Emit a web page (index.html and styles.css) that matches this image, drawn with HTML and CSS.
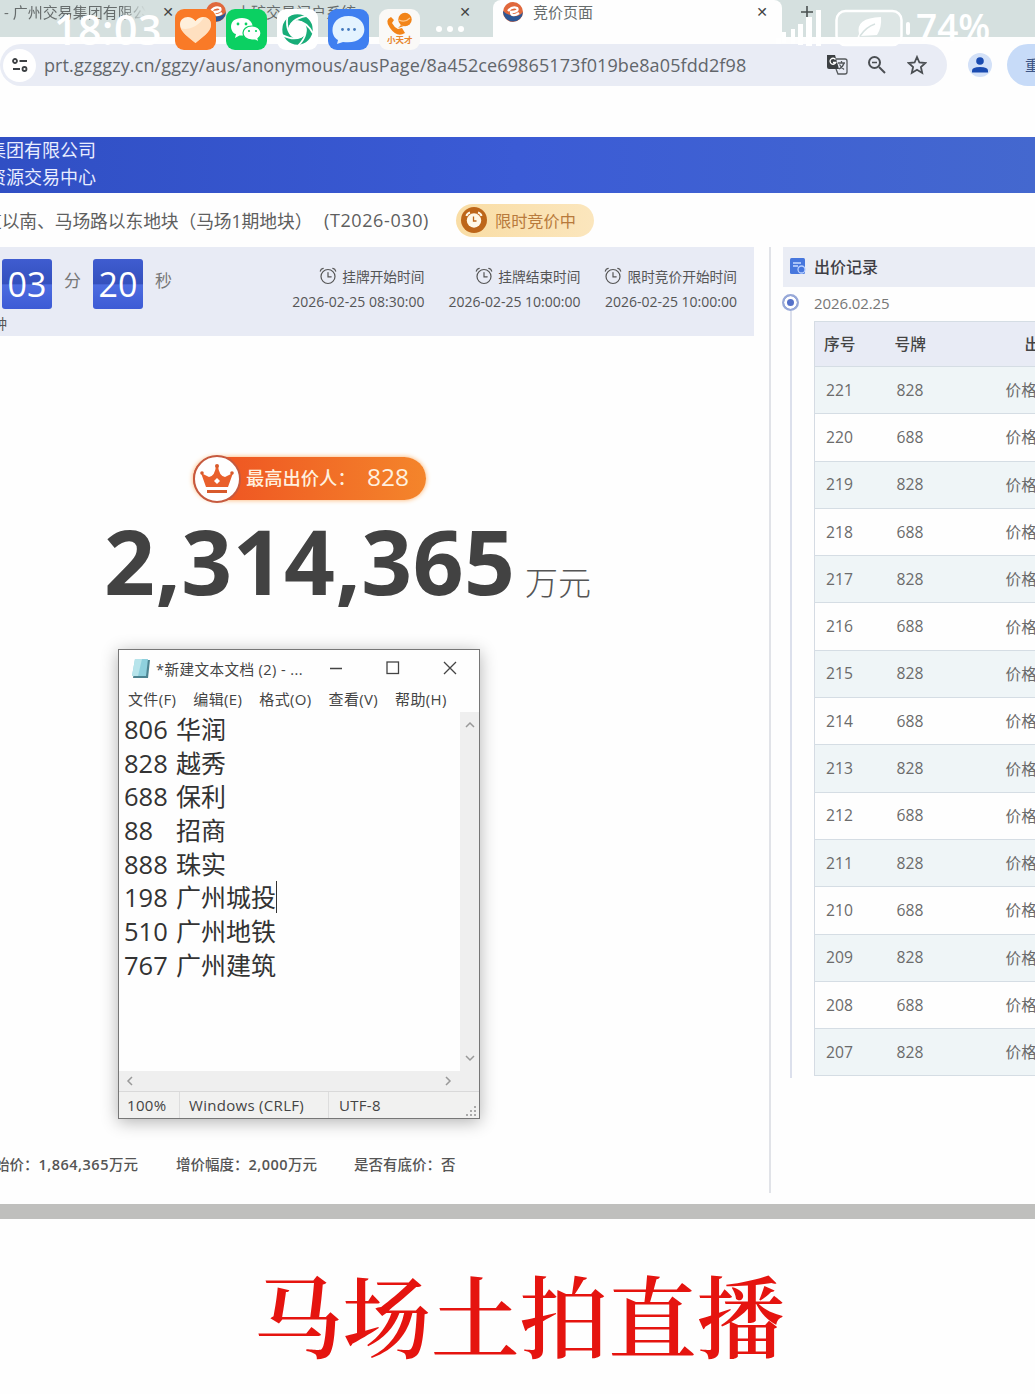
FILE: index.html
```html
<!DOCTYPE html>
<html lang="zh-CN">

<head>
    <meta charset="UTF-8">
    <meta name="viewport" content="width=device-width, initial-scale=1.0">
    <title>竞价页面</title>
    <link rel="stylesheet" href="styles.css">
</head>

<body>
    <!-- Shared icons -->
    <svg class="defs" width="0" height="0">
        <symbol id="clock" viewBox="0 0 18 18">
            <g fill="none" stroke="currentColor" stroke-width="1.2" stroke-linecap="round">
                <circle cx="9" cy="9.5" r="7" />
                <path d="M9 5.5v4.3h3.2M1.3 4.2Q1.8 1.8 4.2 1.4M16.7 4.2Q16.2 1.8 13.8 1.4" />
            </g>
        </symbol>
        <symbol id="logo" viewBox="0 0 20 20">
            <circle cx="10" cy="10" r="10" fill="#e0683c" />
            <path d="M0 9a10 10 0 0 0 20 1c-4 5-9 5-13 3-3-1-5-2-7-4z" fill="#2d5795" />
            <path d="M5 9q4-5 9-3c2 3-2 4-6 4 0 4 4 4 8 1" fill="none" stroke="#fff" stroke-width="2.3" />
        </symbol>
    </svg>

    <div class="tabs">
        <div class="tab tab-first"><span class="tab-text">- 广州交易集团有限公</span><span class="close">✕</span></div>
        <div class="tab tab-second"><svg class="logo"><use href="#logo" /></svg><span class="tab-text">土矿交易门户系统</span><span class="close">✕</span></div>
        <div class="tab tab-active"><svg class="logo"><use href="#logo" /></svg><span class="tab-text">竞价页面</span><span class="close">✕</span></div>
        <svg class="plus" width="14" height="14" viewBox="0 0 14 14"><path d="M7 1v12M1 7h12" stroke="#4a5050" stroke-width="1.6" /></svg>
    </div>

    <div class="toolbar">
        <div class="address">
            <span class="site">
                <svg width="16" height="14" viewBox="0 0 16 14" fill="none" stroke="#3c4043" stroke-width="1.8"><circle cx="3" cy="3" r="2" /><path d="M7.5 3H15M1 11h7" /><circle cx="12.5" cy="11" r="2" /></svg>
            </span>
            <span class="url">prt.gzggzy.cn/ggzy/aus/anonymous/ausPage/8a452ce69865173f019be8a05fdd2f98</span>
            <svg class="translate" width="22" height="22" viewBox="0 0 22 22">
                <path d="M1 1h8l4 14H3q-2 0-2-2z" fill="#3c4043" />
                <path d="M9.5 5.5a3 3 0 1 0 .3 3H7" fill="none" stroke="#fff" stroke-width="1.3" />
                <path d="M10 5h9q2 0 2 2v11q0 2-2 2h-7l-2-5M12 9h7M15.5 7v2M18 9q-1 4-5 6M13.5 10.5q2 3 4.5 5" fill="none" stroke="#55595c" stroke-width="1.3" />
            </svg>
            <svg class="search" width="20" height="20" viewBox="0 0 20 20" fill="none" stroke="#4b4f53" stroke-width="2"><circle cx="7.5" cy="7.5" r="5.5" /><path d="M12 12l6 6" /><path d="M5 7.5h5" stroke-width="1.5" /></svg>
            <svg class="star" width="20" height="20" viewBox="0 0 20 20"><path d="M10 2l2.4 5.5 6 .5-4.5 4 1.3 6-5.2-3.2L4.8 18l1.3-6L1.6 8l6-.5z" fill="none" stroke="#4b4f53" stroke-width="1.8" /></svg>
        </div>
        <span class="avatar"><svg width="16" height="16" viewBox="0 0 16 16" fill="#1a4bb0"><circle cx="8" cy="4" r="3.8" /><path d="M0 15.5v-2q0-3.5 8-3.5t8 3.5v2z" /></svg></span>
        <span class="restart">重</span>
    </div>

    <!-- Phone status bar, floats over the browser -->
    <div class="status">
        <span class="time">18:03</span>
        <svg class="app" viewBox="0 0 41 41"><rect width="41" height="41" rx="9" fill="#f97a27" /><path d="M20.5 34C9 25 5 21 5 15.5 5 8 15 5 20.5 12 26 5 36 8 36 15.5 36 21 32 25 20.5 34z" fill="#fff0dc" /><path d="M20.5 34C14 29 8 24 6 19c5 3 18-1 23-11 5 1 7 4 7 7.5C36 21 32 25 20.5 34z" fill="#ffd9b4" opacity=".7" /></svg>
        <svg class="app" viewBox="0 0 41 41"><rect width="41" height="41" rx="9" fill="#0bd062" /><path d="M16 9C1 9 4 24 10 25l-1 4 4.5-2.5h4C30 26 30 9 16 9z" fill="#fff" /><path d="M26 17c-12 0-12 14 0 14h3l4 2-1-3.5C38 25 34 17 26 17z" fill="#fff" stroke="#0bd062" stroke-width="1.2" /><g fill="#0bd062"><circle cx="12" cy="15" r="1.4" /><circle cx="20" cy="15" r="1.4" /><circle cx="23" cy="22" r="1.1" /><circle cx="30" cy="22" r="1.1" /></g></svg>
        <svg class="app" viewBox="0 0 41 41"><rect width="41" height="41" rx="9" fill="#fff" />
            <circle cx="20.5" cy="20.5" r="12.2" fill="none" stroke="#18ad78" stroke-width="6" />
            <g fill="none" stroke="#fff" stroke-width="1.8"><path id="cut" d="M12 22Q13 10 29 7" /><use href="#cut" transform="rotate(72 20.5 20.5)" /><use href="#cut" transform="rotate(144 20.5 20.5)" /><use href="#cut" transform="rotate(216 20.5 20.5)" /><use href="#cut" transform="rotate(288 20.5 20.5)" /></g>
        </svg>
        <svg class="app" viewBox="0 0 41 41"><rect width="41" height="41" rx="9" fill="#3f7ff0" /><path d="M20.500 7C2 7 1 27 10 31l-1 4 6-2c28 4 27-26 5.5-26z" fill="#e4f3ff" /><g fill="#4479bd"><circle cx="14.5" cy="20.5" r="1.4" /><circle cx="20.5" cy="20.5" r="1.4" /><circle cx="26.5" cy="20.5" r="1.4" /></g></svg>
        <svg class="app" viewBox="0 0 41 41"><rect width="41" height="41" rx="9" fill="#faf9f7" /><circle cx="26" cy="10.5" r="6.7" fill="#f28418" /><path d="M22 16l-3 3 6-2zM12 8q-7 3-1 11 7 10 15 5l-3-5-4 1q-4-2-6-6l2-3z" fill="#f28418" /><path d="M20 11q6 3 11-2" fill="none" stroke="#ffc789" stroke-width="1.2" /><text x="8" y="34" class="app-name">小天才</text></svg>
        <span class="dots"><i></i><i></i><i></i></span>
        <svg class="signal" width="80" height="46" viewBox="0 0 80 46" fill="#fff"><path d="M28 38h5v6h-5zM34 32h4v11h-4zM43 29h4v15h-4zM50 24h5v21h-5zM58 17h6v29h-6zM68 10h5v36h-5z" /></svg>
        <svg class="battery" width="76" height="38" viewBox="0 0 76 38"><rect x="1.5" y="2" width="65" height="34" rx="9" fill="#fff" fill-opacity=".2" stroke="#fff" stroke-width="2.5" /><path d="M46 8q-26 1-22 17l-3 6 4-4 17-1q5-8 4-18z" fill="#fff" /><path d="M25 27q6-9 15-12" fill="none" stroke="#d7e2e1" stroke-width="1.5" /><rect x="71" y="13" width="4" height="13" rx="2" fill="#fff" /></svg>
        <span class="percent">74%</span>
    </div>

    <header class="banner">
        <p>集团有限公司</p>
        <p>资源交易中心</p>
    </header>

    <div class="title">
        <h1>道以南、马场路以东地块（马场1期地块）</h1>
        <span class="code">(T2026-030)</span>
        <span class="state">
            <svg width="26" height="26" viewBox="0 0 26 26"><circle cx="13" cy="13" r="13" fill="#bd661a" /><circle cx="13" cy="13.5" r="7.2" fill="#fff8e8" /><path d="M5.5 9Q6 6.5 9 5.5M20.5 9Q20 6.5 17 5.5" fill="none" stroke="#fff8e8" stroke-width="2" /><path d="M12.5 9.5V14h3" fill="none" stroke="#bd661a" stroke-width="1.3" /></svg>
            限时竞价中
        </span>
    </div>

    <main>
        <section class="auction">
            <div class="countdown">
                <div class="timer">
                    <div class="timer-row">
                        <span class="flip">03</span><span class="unit">分</span>
                        <span class="flip">20</span><span class="unit">秒</span>
                    </div>
                    <p class="hint">钟</p>
                </div>
                <div class="times">
                    <div class="when"><p><svg><use href="#clock" /></svg>挂牌开始时间</p><p class="date">2026-02-25 08:30:00</p></div>
                    <div class="when"><p><svg><use href="#clock" /></svg>挂牌结束时间</p><p class="date">2026-02-25 10:00:00</p></div>
                    <div class="when"><p><svg><use href="#clock" /></svg>限时竞价开始时间</p><p class="date">2026-02-25 10:00:00</p></div>
                </div>
            </div>

            <div class="bidder">
                <span class="crown"><svg width="34" height="32" viewBox="0 0 34 32"><path d="M1 10l8 4q6-1 7-11h2q1 10 7 11l8-4-5 14H6z" fill="#e9602c" /><g fill="#d85a2c"><circle cx="17" cy="3" r="2" /><circle cx="2" cy="10" r="1.8" /><circle cx="32" cy="10" r="1.8" /><path d="M7 27h20v3H7z" /></g><path d="M17 15l3 3-3 3-3-3z" fill="#fff" /></svg></span>
                <span class="bidder-label">最高出价人：</span><b>828</b>
            </div>
            <div class="price"><strong>2,314,365</strong><span>万元</span></div>

            <div class="rules">
                <span class="start">始价：<em>1,864,365</em>万元</span>
                <span class="step">增价幅度：<em>2,000</em>万元</span>
                <span>是否有底价：否</span>
            </div>
        </section>

        <aside class="records">
            <h2><svg width="16" height="16" viewBox="0 0 16 16"><rect width="15" height="16" rx="1.5" fill="#4777dd" /><path d="M3 5h8M3 8h5" stroke="#c9dcff" stroke-width="1.3" /><circle cx="11.5" cy="11.5" r="3.5" fill="#4777dd" stroke="#b9d0ff" stroke-width="1.3" /></svg>出价记录</h2>
            <div class="timeline">
                <div class="rail"><span class="dot"></span><span class="line"></span></div>
                <div class="day">
                    <p class="day-date">2026.02.25</p>
                    <table>
                        <thead>
                            <tr><th>序号</th><th>号牌</th><th class="kind">出</th></tr>
                        </thead>
                        <tbody>
                            <tr><td>221</td><td>828</td><td>价格</td></tr>
                            <tr><td>220</td><td>688</td><td>价格</td></tr>
                            <tr><td>219</td><td>828</td><td>价格</td></tr>
                            <tr><td>218</td><td>688</td><td>价格</td></tr>
                            <tr><td>217</td><td>828</td><td>价格</td></tr>
                            <tr><td>216</td><td>688</td><td>价格</td></tr>
                            <tr><td>215</td><td>828</td><td>价格</td></tr>
                            <tr><td>214</td><td>688</td><td>价格</td></tr>
                            <tr><td>213</td><td>828</td><td>价格</td></tr>
                            <tr><td>212</td><td>688</td><td>价格</td></tr>
                            <tr><td>211</td><td>828</td><td>价格</td></tr>
                            <tr><td>210</td><td>688</td><td>价格</td></tr>
                            <tr><td>209</td><td>828</td><td>价格</td></tr>
                            <tr><td>208</td><td>688</td><td>价格</td></tr>
                            <tr><td>207</td><td>828</td><td>价格</td></tr>
                        </tbody>
                    </table>
                </div>
            </div>
        </aside>
    </main>

    <!-- Notepad window -->
    <div class="notepad">
        <div class="note-title">
            <svg width="20" height="21" viewBox="0 0 20 21"><path d="M5 2h14l-2 18H2z" fill="#4d8390" /><path d="M4 1h13l-2 17H1z" fill="#8fd0dd" /><path d="M4 1h7L7 18H1z" fill="#b7e4eb" /></svg>
            <span class="note-name">*新建文本文档 (2) - ...</span>
            <svg class="controls" width="130" height="16" viewBox="0 0 130 16" fill="none" stroke="#444" stroke-width="1.3"><path d="M1 8.5h12M115 2l12 12M127 2l-12 12" /><rect x="58" y="2" width="11.5" height="11.5" /></svg>
        </div>
        <div class="note-menu"><span>文件(F)</span><span>编辑(E)</span><span>格式(O)</span><span>查看(V)</span><span>帮助(H)</span></div>
        <div class="note-body">
            <ul>
                <li><span>806</span>华润</li>
                <li><span>828</span>越秀</li>
                <li><span>688</span>保利</li>
                <li><span>88</span>招商</li>
                <li><span>888</span>珠实</li>
                <li><span>198</span>广州城投<i class="caret"></i></li>
                <li><span>510</span>广州地铁</li>
                <li><span>767</span>广州建筑</li>
            </ul>
            <div class="scroll-v">
                <svg width="10" height="7" viewBox="0 0 10 7"><path d="M1 6l4-4 4 4" /></svg>
                <svg width="10" height="7" viewBox="0 0 10 7"><path d="M1 1l4 4 4-4" /></svg>
            </div>
        </div>
        <div class="scroll-h">
            <svg width="7" height="10" viewBox="0 0 7 10"><path d="M6 1L2 5l4 4" /></svg>
            <svg width="7" height="10" viewBox="0 0 7 10"><path d="M1 1l4 4-4 4" /></svg>
        </div>
        <div class="note-foot">
            <span class="zoom">100%</span><span class="eol">Windows (CRLF)</span><span class="enc">UTF-8</span>
            <svg width="11" height="11" viewBox="0 0 11 11" fill="#aaa"><path d="M8 0h2v2H8zM8 4h2v2H8zM8 8h2v2H8zM4 4h2v2H4zM4 8h2v2H4zM0 8h2v2H0z" /></svg>
        </div>
    </div>

    <footer>
        <p>马场土拍直播</p>
    </footer>
</body>

</html>
```
FILE: styles.css
```css
* {
    box-sizing: border-box;
}

body {
    position: relative;
    width: 1035px;
    height: 1394px;
    margin: 0;
    overflow: hidden;
    font-family: "Open Sans", "Noto Sans CJK SC", sans-serif;
    color: #555;
    background-color: #fefefe;
    white-space: nowrap;
}

p,
h1,
h2,
ul {
    margin: 0;
    padding: 0;
    font-weight: normal;
}

svg {
    flex: none;
}

.defs {
    position: absolute;
}

/* Browser tabs */
.tabs {
    display: flex;
    height: 37px;
    background-color: #d5e0df;
    font-size: 15px;
    color: #666c6c;
}

.tab {
    display: flex;
    align-items: center;
    height: 37px;
    padding-bottom: 14px;
}

.tab-first {
    width: 192px;
    padding-left: 4px;
}

.tab-first .tab-text {
    width: 146px;
    -webkit-mask-image: linear-gradient(90deg, #000 80%, transparent 97%);
    mask-image: linear-gradient(90deg, #000 80%, transparent 97%);
}

.tab-second {
    width: 301px;
    padding-left: 14px;
}

.tab-active {
    width: 289px;
    padding-left: 10px;
    background-color: #fefefe;
    border-radius: 8px 8px 0 0;
}

.logo {
    width: 20px;
    height: 20px;
    margin-right: 10px;
}

.close {
    margin-left: auto;
    margin-right: 14px;
    font-family: "DejaVu Sans", sans-serif;
    font-size: 14px;
    color: #444;
}

.tab-first .close {
    margin-right: 18px;
}

.tab-second .close {
    margin-right: 22px;
}

.plus {
    margin: 5px 0 0 18px;
}

/* Address bar */
.toolbar {
    display: flex;
    align-items: center;
    height: 100px;
    padding-bottom: 44px;
}

.address {
    display: flex;
    align-items: center;
    flex: none;
    width: 947px;
    height: 42px;
    padding-left: 3px;
    background-color: #e9ecf5;
    border-radius: 21px;
}

.site {
    display: flex;
    align-items: center;
    justify-content: center;
    width: 33px;
    height: 33px;
    margin-right: 8px;
    background-color: #fff;
    border-radius: 50%;
}

.url {
    width: 782px;
    font-size: 18px;
    line-height: 40px;
    letter-spacing: 0.11px;
    color: #62666b;
}

.search {
    margin-left: 19px;
}

.star {
    margin-left: 20px;
}

.avatar {
    display: flex;
    align-items: center;
    justify-content: center;
    flex: none;
    width: 24px;
    height: 24px;
    margin-left: 21px;
    background-color: #d3e1f8;
    border-radius: 50%;
}

.restart {
    flex: 1;
    height: 42px;
    margin-left: 15px;
    padding-left: 18px;
    overflow: hidden;
    line-height: 42px;
    font-size: 15px;
    color: #3d5585;
    background-color: #c7dbf8;
    border-radius: 21px 0 0 21px;
}

/* Phone status bar */
.status {
    position: absolute;
    top: 0;
    left: 0;
    display: flex;
    width: 1035px;
    height: 50px;
    padding-left: 54px;
    color: #fff;
}

.time {
    width: 121px;
    font-size: 41px;
    line-height: 58px;
    font-weight: 600;
    letter-spacing: 0.6px;
}

.app {
    width: 41px;
    height: 41px;
    margin: 9px 10px 0 0;
}

.app-name {
    font-size: 8.5px;
    font-weight: bold;
    fill: #e8862c;
}

.dots {
    display: flex;
    gap: 5px;
    margin: 26px 0 0 6px;
}

.dots i {
    width: 6px;
    height: 6px;
    background-color: #fff;
    border-radius: 50%;
}

.signal {
    margin-left: 284px;
}

.battery {
    margin: 9px 0 0 7px;
}

.percent {
    margin-left: 5px;
    font-size: 37px;
    line-height: 54px;
    font-weight: 600;
}

/* Site banner */
.banner {
    height: 56px;
    background: linear-gradient(90deg, #304fc4, #3b5bd5 50%, #4468cf);
    color: #e9edff;
    font-size: 18px;
    line-height: 27px;
    font-weight: 500;
}

.banner p {
    margin-left: -12px;
}

.title {
    display: flex;
    align-items: center;
    height: 54px;
    color: #5f5f5f;
}

.title h1 {
    width: 340px;
    margin-left: -16px;
    font-size: 17.8px;
    letter-spacing: -0.1px;
}

.code {
    width: 132px;
    font-size: 18px;
    letter-spacing: 0.6px;
}

.state {
    display: flex;
    align-items: center;
    gap: 8px;
    width: 138px;
    height: 33px;
    padding-left: 5px;
    font-size: 16.2px;
    color: #b87a3c;
    background: linear-gradient(90deg, #f9dda5, #fbe6bd);
    border-radius: 17px;
}

main {
    display: flex;
    height: 957px;
}

.auction {
    width: 771px;
    height: 946px;
    border-right: 2px solid #e1e3e8;
}

/* Countdown strip */
.countdown {
    display: flex;
    justify-content: space-between;
    width: 754px;
    height: 89px;
    padding-right: 17px;
    background-color: #e8ebf5;
}

.timer {
    padding: 12px 0 0 2px;
}

.timer-row {
    display: flex;
}

.flip {
    width: 50px;
    height: 50px;
    border-radius: 3px;
    background: linear-gradient(#3f5cd0, #3450bd 49%, #4c6ce0 52%, #3d5bd5);
    color: #fff;
    font-size: 34px;
    line-height: 51px;
    text-align: center;
}

.unit {
    width: 41px;
    padding-left: 12px;
    font-size: 17px;
    line-height: 44px;
    color: #777;
}

.hint {
    margin-left: -9px;
    font-size: 14px;
    line-height: 30px;
}

.times {
    display: flex;
    gap: 24px;
    padding-top: 17px;
}

.when {
    text-align: right;
    font-size: 13.7px;
    line-height: 25px;
}

.when svg {
    width: 18px;
    height: 18px;
    margin-right: 5px;
    vertical-align: -3px;
}

.when .date {
    font-size: 14px;
}

/* Highest bid */
.bidder {
    display: flex;
    align-items: center;
    width: 233px;
    height: 43px;
    margin: 121px 0 0 193px;
    padding-bottom: 4px;
    color: #fff0df;
    background: linear-gradient(90deg, #ee4f21, #f4852b);
    border-radius: 22px;
    box-shadow: 0 0 5px #ffb066;
}

.crown {
    display: flex;
    align-items: center;
    justify-content: center;
    flex: none;
    width: 48px;
    height: 48px;
    margin-top: 4px;
    background-color: #fff;
    border: 2px solid #c65a3f;
    border-radius: 50%;
}

.bidder-label {
    width: 121px;
    margin-left: 5px;
    font-size: 18.3px;
    font-weight: 500;
}

.bidder b {
    font-size: 24.5px;
    line-height: 30px;
    font-weight: 500;
}

.price {
    display: flex;
    align-items: baseline;
    height: 120px;
    padding-top: 1px;
    margin-left: 104px;
    line-height: 120px;
    color: #424242;
}

.price strong {
    width: 421px;
    font-size: 89px;
    font-weight: 700;
    letter-spacing: 0.5px;
}

.price span {
    font-size: 33px;
    font-weight: 300;
    color: #555;
}

.rules {
    display: flex;
    margin-top: 533px;
    font-size: 14.5px;
    line-height: 24px;
    font-weight: 500;
}

.rules em {
    font-style: normal;
    font-weight: 600;
    letter-spacing: 0.5px;
}

.start {
    width: 181px;
    margin-left: -5px;
}

.step {
    width: 178px;
}

/* Bid records */
.records {
    flex: none;
    width: 252px;
    margin-left: 12px;
}

.records h2 {
    display: flex;
    align-items: center;
    gap: 8px;
    height: 40px;
    padding: 0 0 2px 7px;
    font-size: 16px;
    font-weight: 500;
    color: #3e3e44;
    background-color: #eaedf5;
}

.timeline {
    display: flex;
}

.rail {
    display: flex;
    flex-direction: column;
    align-items: center;
    width: 15px;
    height: 791px;
    padding-top: 7px;
}

.dot {
    flex: none;
    width: 17px;
    height: 17px;
    background-color: #5571c9;
    border: 2px solid #98a9d8;
    border-radius: 50%;
    box-shadow: inset 0 0 0 3px #fff;
}

.line {
    width: 2px;
    flex: 1;
    background-color: #dce0ec;
}

.day {
    margin-left: 16px;
}

.day-date {
    height: 34px;
    font-size: 15px;
    line-height: 32px;
    letter-spacing: -0.1px;
    color: #777;
}

table {
    width: 221px;
    table-layout: fixed;
    border-collapse: collapse;
    border-left: 1px solid #d5dbe3;
    font-size: 15.7px;
    color: #6b6b6b;
}

thead tr {
    height: 45px;
    background-color: #e8ebf5;
    color: #444;
}

tbody tr {
    height: 47.3px;
}

tbody tr:nth-child(odd) {
    background-color: #eff5f7;
}

tr {
    border-top: 1px solid #d5dde4;
}

tbody tr:last-child {
    border-bottom: 1px solid #d5dde4;
}

th,
td {
    width: 71px;
    padding: 0 0 1px 11px;
    text-align: left;
}

th {
    padding-left: 9px;
    font-weight: 500;
}

th:last-child,
td:last-child {
    width: 79px;
    padding-left: 49px;
}

th.kind:last-child {
    padding-left: 68px;
}

/* Notepad */
.notepad {
    position: absolute;
    top: 649px;
    left: 118px;
    width: 362px;
    height: 470px;
    background-color: #fefefe;
    border: 1px solid #777;
    box-shadow: 0 3px 16px rgba(0, 0, 0, 0.3);
    color: #444;
}

.note-title {
    display: flex;
    align-items: center;
    height: 36px;
    padding-left: 12px;
    font-size: 14.6px;
}

.note-name {
    width: 173px;
    margin-left: 5px;
    letter-spacing: 0.4px;
}

.note-menu {
    display: flex;
    height: 26px;
    padding-left: 9px;
    gap: 17px;
    font-size: 15px;
    line-height: 27px;
    letter-spacing: 0.35px;
}

.note-body {
    display: flex;
    height: 359px;
}

.note-body ul {
    width: 341px;
    padding: 1px 0 0 5px;
    list-style: none;
    color: #333;
    font-size: 25px;
    line-height: 33.7px;
}

.note-body li {
    display: flex;
    height: 33.7px;
}

.note-body li span {
    width: 52px;
    font-size: 25.5px;
}

.caret {
    width: 1px;
    height: 32px;
    background-color: #333;
}

.scroll-v {
    display: flex;
    flex-direction: column;
    justify-content: space-between;
    align-items: center;
    width: 19px;
    padding: 9px 0;
    background-color: #efefef;
}

.scroll-v path,
.scroll-h path {
    fill: none;
    stroke: #999;
    stroke-width: 1.5;
}

.scroll-h {
    display: flex;
    justify-content: space-between;
    align-items: center;
    height: 20px;
    padding: 0 27px 0 7px;
    background-color: #efefef;
}

.note-foot {
    display: flex;
    height: 27px;
    font-size: 15px;
    line-height: 26px;
    letter-spacing: 0.3px;
    background-color: #f1f1f0;
    border-top: 1px solid #d9d9d9;
}

.note-foot svg {
    margin: 14px 2px 0 auto;
}

.zoom {
    width: 61px;
    padding-left: 8px;
    border-right: 1px solid #ddd;
}

.eol {
    width: 149px;
    padding-left: 9px;
    border-right: 1px solid #ddd;
}

.enc {
    padding-left: 10px;
}

/* Caption */
footer {
    height: 190px;
    padding-left: 254px;
    border-top: 15px solid #bfbfbd;
}

footer p {
    font-family: "Noto Serif CJK SC", "Noto Sans CJK SC", serif;
    font-size: 88.5px;
    line-height: 188px;
    font-weight: 600;
    color: #e5140f;
}
```
